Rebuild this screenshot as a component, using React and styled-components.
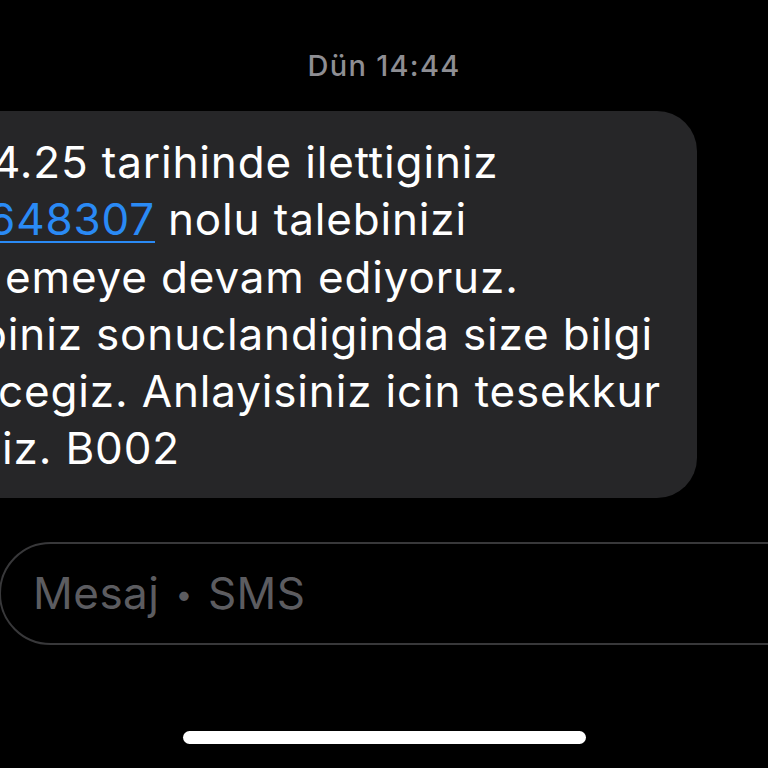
import React from "react";
import styled, { createGlobalStyle } from "styled-components";

const Global = createGlobalStyle`
  html, body { margin: 0; padding: 0; background: #000; }
  body { overflow: hidden; width: 768px; height: 768px; }
  #root { width: 768px; height: 768px; }
`;

const Screen = styled.div`
  width: 768px;
  height: 768px;
  background: #000;
  display: flex;
  flex-direction: column;
  overflow: hidden;
  font-family: Inter, "Noto Sans", sans-serif;
`;

const Stamp = styled.div`
  margin-top: 46px;
  height: 40px;
  line-height: 40px;
  text-align: center;
  color: #8e8e93;
  font-size: 29px;
  font-weight: 500;
  letter-spacing: 1.3px;
`;

const Bubble = styled.div`
  margin-top: 25px;
  margin-left: -60px;
  width: 757px;
  box-sizing: border-box;
  background: #262628;
  border-radius: 40px;
  padding: 23px 0 20px 60px;
  overflow: hidden;
`;

const Line = styled.div`
  height: 57.3px;
  line-height: 57.3px;
  font-size: 44px;
  letter-spacing: 0.85px;
  color: #fff;
  white-space: nowrap;
  margin-left: ${(p) => p.$shift}px;
`;

const Link = styled.span`
  color: #2a8af5;
  text-decoration: underline;
  text-decoration-thickness: 2px;
  text-underline-offset: 6px;
  margin-right: 13px;
`;

const Composer = styled.div`
  margin-top: 44px;
  margin-left: -1px;
  width: 820px;
  height: 103px;
  box-sizing: border-box;
  border: 2px solid #38383a;
  border-radius: 52px;
  display: flex;
  align-items: center;
  padding-left: 32px;
`;

const Placeholder = styled.span`
  font-size: 44px;
  letter-spacing: 0.5px;
  color: #5c5c60;
`;

const Dot = styled.span`
  font-size: 30px;
  vertical-align: 4px;
  margin: 0 15px 0 16px;
`;

const HomeBar = styled.div`
  margin: 86px auto 0;
  width: 403px;
  height: 13px;
  border-radius: 7px;
  background: #fff;
`;

export default function App() {
  return (
    <Screen>
      <Global />
      <Stamp>Dün 14:44</Stamp>
      <Bubble>
        <Line $shift={-8}>4.25 tarihinde ilettiginiz</Line>
        <Line $shift={-12}>
          <Link>648307</Link>nolu talebinizi
        </Line>
        <Line $shift={5}>emeye devam ediyoruz.</Line>
        <Line $shift={-20}>biniz sonuclandiginda size bilgi</Line>
        <Line $shift={-2}>cegiz. Anlayisiniz icin tesekkur</Line>
        <Line $shift={2}>iz. B002</Line>
      </Bubble>
      <Composer>
        <Placeholder>
          Mesaj<Dot>•</Dot>SMS
        </Placeholder>
      </Composer>
      <HomeBar />
    </Screen>
  );
}
